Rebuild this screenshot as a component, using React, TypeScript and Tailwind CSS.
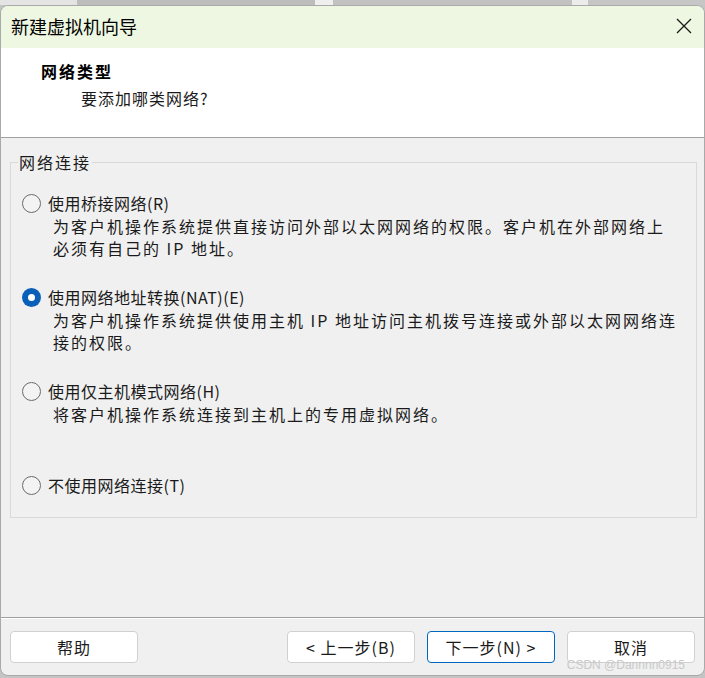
import React from "react"

const font = "font-['Noto_Sans_CJK_SC','Noto_Sans',sans-serif]"

function Radio({ checked }: { checked?: boolean }) {
  if (checked) {
    return (
      <span className="w-[19px] h-[19px] rounded-full bg-[#0a5fb8] flex items-center justify-center shrink-0">
        <span className="w-[7px] h-[7px] rounded-full bg-white" />
      </span>
    )
  }
  return <span className="w-[19px] h-[19px] rounded-full border border-[#6b6b6b] bg-[#f3f3f3] shrink-0" />
}

type Option = { label: string; desc: string[]; checked?: boolean }

const options: Option[] = [
  {
    label: "使用桥接网络(R)",
    desc: ["为客户机操作系统提供直接访问外部以太网网络的权限。客户机在外部网络上", "必须有自己的 IP 地址。"],
  },
  {
    label: "使用网络地址转换(NAT)(E)",
    desc: ["为客户机操作系统提供使用主机 IP 地址访问主机拨号连接或外部以太网网络连", "接的权限。"],
    checked: true,
  },
  {
    label: "使用仅主机模式网络(H)",
    desc: ["将客户机操作系统连接到主机上的专用虚拟网络。"],
  },
  { label: "不使用网络连接(T)", desc: [] },
]

function Btn({ children, primary }: { children: React.ReactNode; primary?: boolean }) {
  return (
    <button
      className={
        primary
          ? "w-[128px] h-[32px] rounded-[4px] bg-white border border-[#0067c0] text-[16px] tracking-[1px] text-[#1a1a1a] flex items-center justify-center"
          : "w-[128px] h-[32px] rounded-[4px] bg-white border border-[#d0d0d0] text-[16px] tracking-[1px] text-[#1a1a1a] flex items-center justify-center"
      }
    >
      {children}
    </button>
  )
}

export default function App() {
  return (
    <div className={`w-[705px] h-[678px] bg-[#c4c4c4] flex flex-col overflow-hidden relative ${font}`}>
      <div className="h-[5px] flex shrink-0">
        <div className="w-[77px] bg-[#e4e4e4]" />
        <div className="w-[238px] bg-[#bdbdbd]" />
        <div className="w-[18px] bg-[#efefef]" />
        <div className="w-[239px] bg-[#c2c2c2]" />
        <div className="w-[16px] bg-[#ececec]" />
        <div className="flex-1 bg-[#c6c6c6]" />
      </div>

      <div className="flex-1 flex flex-col bg-[#f0f0f0] rounded-[8px] border border-[#a9a9a9] overflow-hidden mb-[2px]">
        {/* title bar */}
        <div className="h-[42px] bg-[#eef7e1] flex items-center justify-between pl-[10px] pr-[12px] shrink-0">
          <span className="text-[18px] leading-[20px] text-black -mt-[2px]">新建虚拟机向导</span>
          <svg width="16" height="16" viewBox="0 0 16 16" className="text-[#1a1a1a] -mt-[2px]">
            <path d="M1 1 L15 15 M15 1 L1 15" stroke="currentColor" strokeWidth="1.3" fill="none" />
          </svg>
        </div>

        {/* header */}
        <div className="h-[90px] bg-white border-b border-[#a0a0a0] shrink-0 pt-[13px]">
          <div className="pl-[40px] text-[16px] leading-[20px] font-bold text-black tracking-[2px]">网络类型</div>
          <div className="pl-[80px] mt-[7px] text-[16px] leading-[20px] text-[#1a1a1a] tracking-[1px]">要添加哪类网络?</div>
        </div>

        {/* body */}
        <div className="flex-1 pt-[14px]">
          <fieldset className="ml-[9px] mr-[7px] border border-[#d9d9d9] pl-[11px] pb-[20px]">
            <legend className="-ml-[4px] px-[1px] text-[16px] leading-[20px] text-[#1a1a1a] tracking-[2px]">网络连接</legend>
            <div className="flex flex-col gap-[25px] pt-[19px]">
              {options.map((o, i) => (
                <div key={i}>
                  <div className="h-[24px] flex items-center gap-[7px]">
                    <Radio checked={o.checked} />
                    <span className="text-[16px] leading-[24px] text-[#1a1a1a] tracking-[0.5px]">{o.label}</span>
                  </div>
                  {o.desc.length > 0 && (
                    <div className="pl-[31px] min-h-[45px] text-[16px] leading-[22px] text-[#1a1a1a] tracking-[2px]">
                      {o.desc.map((d, j) => (
                        <div key={j} className="whitespace-nowrap">{d}</div>
                      ))}
                    </div>
                  )}
                </div>
              ))}
            </div>
          </fieldset>
        </div>

        {/* footer */}
        <div className="border-t border-[#a0a0a0] shrink-0">
          <div className="border-t border-white h-[57px] flex items-start px-[9px] pt-[12px]">
            <Btn>帮助</Btn>
            <div className="flex-1" />
            <div className="flex gap-[12px]">
              <Btn>&lt; 上一步(B)</Btn>
              <Btn primary>下一步(N) &gt;</Btn>
              <Btn>取消</Btn>
            </div>
          </div>
        </div>
      </div>

      <div className="absolute right-[20px] bottom-[6px] text-[12px] leading-[14px] text-[#c9c9c9] font-['Liberation_Sans',sans-serif]">
        CSDN @Dannnn0915
      </div>
    </div>
  )
}
